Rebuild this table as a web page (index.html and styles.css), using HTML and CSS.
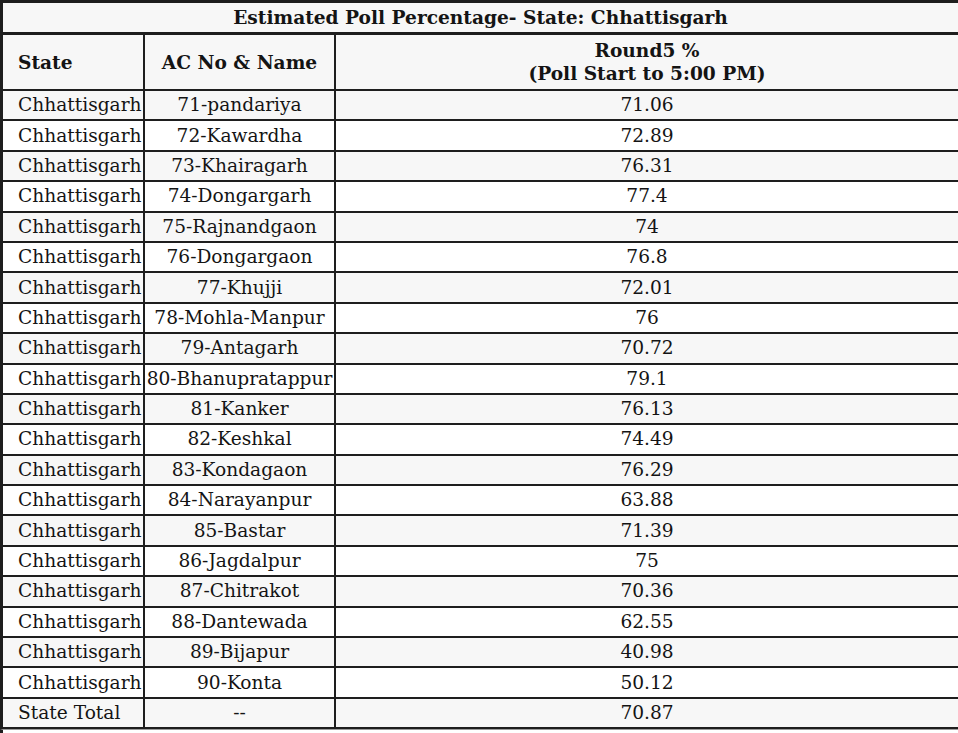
FILE: index.html
```html
<!DOCTYPE html>
<html>
<head>
<meta charset="utf-8">
<link rel="stylesheet" href="styles.css">
</head>
<body>
<table class="poll">
  <colgroup>
    <col class="c-state">
    <col class="c-ac">
    <col class="c-round">
  </colgroup>
  <tr class="title-row"><th colspan="3">Estimated Poll Percentage- State: Chhattisgarh</th></tr>
  <tr class="head-row">
    <th class="state">State</th>
    <th>AC No &amp; Name</th>
    <th>Round5 %<br>(Poll Start to 5:00 PM)</th>
  </tr>
  <tr><td class="state">Chhattisgarh</td><td>71-pandariya</td><td>71.06</td></tr>
  <tr><td class="state">Chhattisgarh</td><td>72-Kawardha</td><td>72.89</td></tr>
  <tr><td class="state">Chhattisgarh</td><td>73-Khairagarh</td><td>76.31</td></tr>
  <tr><td class="state">Chhattisgarh</td><td>74-Dongargarh</td><td>77.4</td></tr>
  <tr><td class="state">Chhattisgarh</td><td>75-Rajnandgaon</td><td>74</td></tr>
  <tr><td class="state">Chhattisgarh</td><td>76-Dongargaon</td><td>76.8</td></tr>
  <tr><td class="state">Chhattisgarh</td><td>77-Khujji</td><td>72.01</td></tr>
  <tr><td class="state">Chhattisgarh</td><td>78-Mohla-Manpur</td><td>76</td></tr>
  <tr><td class="state">Chhattisgarh</td><td>79-Antagarh</td><td>70.72</td></tr>
  <tr><td class="state">Chhattisgarh</td><td>80-Bhanupratappur</td><td>79.1</td></tr>
  <tr><td class="state">Chhattisgarh</td><td>81-Kanker</td><td>76.13</td></tr>
  <tr><td class="state">Chhattisgarh</td><td>82-Keshkal</td><td>74.49</td></tr>
  <tr><td class="state">Chhattisgarh</td><td>83-Kondagaon</td><td>76.29</td></tr>
  <tr><td class="state">Chhattisgarh</td><td>84-Narayanpur</td><td>63.88</td></tr>
  <tr><td class="state">Chhattisgarh</td><td>85-Bastar</td><td>71.39</td></tr>
  <tr><td class="state">Chhattisgarh</td><td>86-Jagdalpur</td><td>75</td></tr>
  <tr><td class="state">Chhattisgarh</td><td>87-Chitrakot</td><td>70.36</td></tr>
  <tr><td class="state">Chhattisgarh</td><td>88-Dantewada</td><td>62.55</td></tr>
  <tr><td class="state">Chhattisgarh</td><td>89-Bijapur</td><td>40.98</td></tr>
  <tr><td class="state">Chhattisgarh</td><td>90-Konta</td><td>50.12</td></tr>
  <tr><td class="state">State Total</td><td>--</td><td>70.87</td></tr>
</table>
<div class="after"></div>
</body>
</html>
```

FILE: styles.css
```css
html, body {
  margin: 0;
  padding: 0;
  overflow: hidden;
  background: #ffffff;
}

body {
  width: 958px;
  height: 733px;
  font-family: "DejaVu Serif", serif;
  color: #141414;
}

.poll {
  width: 960px;
  table-layout: fixed;
  border-collapse: separate;
  border-spacing: 0;
  border-left: 3px solid #1e1e1e;
  border-top: 3px solid #1e1e1e;
  font-size: 18.6px;
}

.c-state { width: 142px; }
.c-ac { width: 191px; }
.c-round { width: auto; }

.poll th,
.poll td {
  border-right: 2px solid #1e1e1e;
  border-bottom: 2px solid #1e1e1e;
  padding: 0 1px;
  text-align: center;
  white-space: nowrap;
  overflow: hidden;
  line-height: 22px;
}

.poll td {
  height: 28.4px;
  font-weight: normal;
}

.poll tr:nth-child(odd) td {
  background: #f7f7f7;
}

.poll tr:nth-child(even) td {
  background: #ffffff;
}

.title-row th {
  height: 29px;
  background: #f7f7f7;
  border-bottom-width: 3px;
  font-weight: bold;
}

.head-row th {
  height: 54px;
  background: #f7f7f7;
  font-weight: bold;
  line-height: 23px;
}

.poll .state {
  text-align: left;
  padding-left: 15px;
  padding-right: 0;
}

.after {
  height: 4px;
  border-left: 3px solid #1e1e1e;
  border-top: 1px solid #9a9a9a;
  width: 960px;
}
```
